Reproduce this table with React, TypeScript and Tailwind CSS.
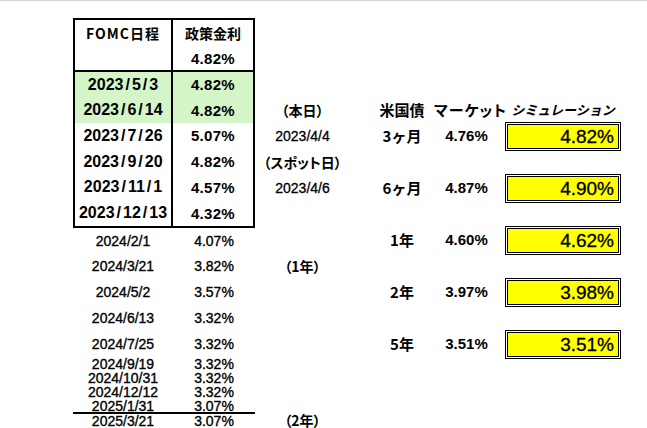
import React from "react";

const jp = "font-['Noto_Sans_CJK_JP',sans-serif]";
const sans = "font-['Liberation_Sans',Arial,sans-serif]";
const palt = "[font-feature-settings:'palt']";

const upper = [
  { d: "2023/5/3", r: "4.82%", green: true, h: "h-[25.5px]" },
  { d: "2023/6/14", r: "4.82%", green: true, h: "h-[25.5px]" },
  { d: "2023/7/26", r: "5.07%", green: false, h: "h-[25.75px]" },
  { d: "2023/9/20", r: "4.82%", green: false, h: "h-[25.75px]" },
  { d: "2023/11/1", r: "4.57%", green: false, h: "h-[25.75px]" },
  { d: "2023/12/13", r: "4.32%", green: false, h: "h-[25.75px]" },
];

const lower = [
  { d: "2024/2/1", r: "4.07%", h: "h-[25px]" },
  { d: "2024/3/21", r: "3.82%", h: "h-[26px]" },
  { d: "2024/5/2", r: "3.57%", h: "h-[26px]" },
  { d: "2024/6/13", r: "3.32%", h: "h-[26px]" },
  { d: "2024/7/25", r: "3.32%", h: "h-[26px]" },
  { d: "2024/9/19", r: "3.32%", h: "h-[14px]" },
  { d: "2024/10/31", r: "3.32%", h: "h-[14px]" },
  { d: "2024/12/12", r: "3.32%", h: "h-[14px]" },
  { d: "2025/1/31", r: "3.07%", h: "h-[15px] border-b-2 border-black" },
  { d: "2025/3/21", r: "3.07%", h: "h-[14px]" },
];

type Sim = { a?: string; aDate?: boolean; b?: string; c?: string; v?: string; head?: boolean };

const rows: Sim[] = [
  { a: "（本日）", head: true },
  { a: "2023/4/4", aDate: true, b: "3ヶ月", c: "4.76%", v: "4.82%" },
  { a: "（スポット日）" },
  { a: "2023/4/6", aDate: true, b: "6ヶ月", c: "4.87%", v: "4.90%" },
  {},
  { b: "1年", c: "4.60%", v: "4.62%" },
  { a: "（1年）" },
  { b: "2年", c: "3.97%", v: "3.98%" },
  {},
  { b: "5年", c: "3.51%", v: "3.51%" },
];

// dates in the bordered table are set wide, slashes as wide as digits
function WideDate({ d }: { d: string }) {
  const parts = d.split("/");
  return (
    <span className="text-[16px] tracking-normal">
      {parts.map((p, i) => (
        <React.Fragment key={i}>
          {i > 0 && <span className="px-[2px]">/</span>}
          {p}
        </React.Fragment>
      ))}
    </span>
  );
}

function SimBox({ v }: { v: string }) {
  return (
    <div className={`ml-auto flex h-[29px] w-[116px] items-center justify-end border-[3px] border-double border-black bg-[#ffff00] bg-clip-padding pr-[4px] ${sans} text-[19px] leading-none [-webkit-text-stroke:0.3px_black]`}>
      {v}
    </div>
  );
}

function LeftTable() {
  return (
    <div className="w-[182px] shrink-0">
      <div className={`border-2 border-black ${sans} text-[15px] font-bold leading-none tracking-[0.3px]`}>
        <div className="flex border-b-2 border-black">
          <div className="w-[98px] border-r-2 border-black">
            <div className={`flex h-[25px] items-center justify-center ${jp} text-[14px] tracking-[1px]`}>FOMC日程</div>
            <div className="h-[25px]" />
          </div>
          <div className="flex-1">
            <div className={`flex h-[25px] items-center justify-center ${jp} text-[14px] tracking-normal`}>政策金利</div>
            <div className="flex h-[25px] items-center justify-center pt-[2px]">4.82%</div>
          </div>
        </div>
        {upper.map((u) => (
          <div key={u.d} className={`flex ${u.h} ${u.green ? "bg-[#d3f5c8]" : ""}`}>
            <div className="flex w-[98px] items-center justify-center border-r-2 border-black">
              <WideDate d={u.d} />
            </div>
            <div className="flex flex-1 items-center justify-center">{u.r}</div>
          </div>
        ))}
      </div>
      <div className={`${sans} text-[14px] leading-[14px] [-webkit-text-stroke:0.35px_black]`}>
        {lower.map((l) => (
          <div key={l.d} className={`grid grid-cols-[100px_82px] items-center ${l.h}`}>
            <div className="text-center">{l.d}</div>
            <div className="text-center">{l.r}</div>
          </div>
        ))}
      </div>
    </div>
  );
}

function RightPanel() {
  return (
    <div className="flex flex-col pt-[79px]">
      {rows.map((r, i) => (
        <div key={i} className="flex h-[26px] items-center">
          <div className={`w-[95px] text-center ${r.aDate ? `${sans} text-[14px] [-webkit-text-stroke:0.3px_black]` : `${jp} ${palt} text-[14px] font-bold`}`}>
            {r.a}
          </div>
          {r.head ? (
            <>
              <div className={`w-[84px] pl-[20px] text-center ${jp} text-[15px] font-bold`}>米国債</div>
              <div className={`w-[65px] text-center ${jp} ${palt} text-[15px] font-bold tracking-[1px] whitespace-nowrap`}>マーケット</div>
              <div className={`w-[122px] pl-[6px] text-center ${jp} text-[13px] font-bold italic whitespace-nowrap`}>シミュレーション</div>
            </>
          ) : (
            <>
              <div className={`w-[84px] pl-[20px] text-center ${jp} text-[15px] font-bold`}>{r.b}</div>
              <div className={`w-[65px] text-center ${sans} text-[15px] font-bold`}>{r.c}</div>
              <div className="w-[122px]">{r.v && <SimBox v={r.v} />}</div>
            </>
          )}
        </div>
      ))}
      <div className="h-[56px]" />
      <div className="flex h-[14px] items-center">
        <div className={`w-[95px] text-center ${jp} ${palt} text-[14px] font-bold leading-none`}>（2年）</div>
      </div>
    </div>
  );
}

export default function App() {
  return (
    <div className="h-[428px] w-[647px] overflow-hidden border-t border-[#d4d4d4] bg-white text-black">
      <div className="flex pl-[73px] pt-[17px]">
        <LeftTable />
        <RightPanel />
      </div>
    </div>
  );
}
